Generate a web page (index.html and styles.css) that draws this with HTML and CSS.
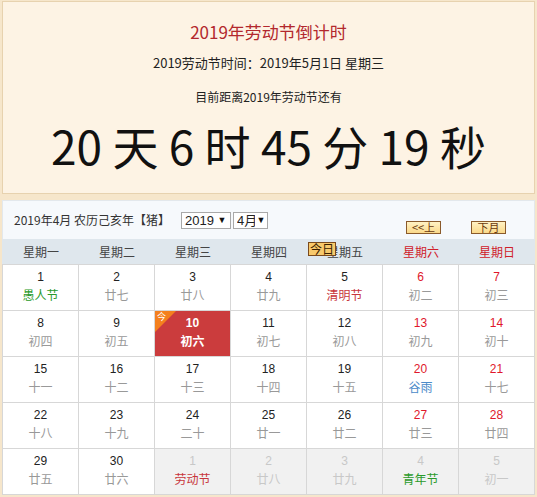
FILE: index.html
```html
<!DOCTYPE html>
<html lang="zh-CN">
<head>
<meta charset="utf-8">
<title>2019年劳动节倒计时</title>
<link rel="stylesheet" href="styles.css">
</head>
<body>
<div class="countdown">
  <h1 class="cd-title">2019年劳动节倒计时</h1>
  <p class="cd-line cd-date">2019劳动节时间：2019年5月1日 星期三</p>
  <p class="cd-line cd-remain">目前距离2019年劳动节还有</p>
  <p class="cd-big">20 天 6 时 45 分 19 秒</p>
</div>

<div class="calendar">
  <div class="cal-head">
    <span class="cal-title">2019年4月 农历己亥年【猪】</span>
    <span class="fake-select sel-year"><span class="sel-text">2019</span><span class="sel-arrow">▼</span></span>
    <span class="fake-select sel-month"><span class="sel-text">4月</span><span class="sel-arrow">▼</span></span>
    <span class="nav">
      <span class="btn btn-prev">&lt;&lt;上</span>
      <span class="btn btn-next">下月</span>
    </span>
  </div>
  <div class="weekdays">
    <span>星期一</span><span>星期二</span><span>星期三</span><span>星期四</span><span>星期五</span><span class="we">星期六</span><span class="we">星期日</span>
  </div>
  <span class="btn btn-today">今日</span>
  <div class="grid">
    <div class="cell"><b>1</b><i class="hol-green">愚人节</i></div>
    <div class="cell"><b>2</b><i>廿七</i></div>
    <div class="cell"><b>3</b><i>廿八</i></div>
    <div class="cell"><b>4</b><i>廿九</i></div>
    <div class="cell"><b>5</b><i class="hol-red">清明节</i></div>
    <div class="cell wkend"><b>6</b><i>初二</i></div>
    <div class="cell wkend"><b>7</b><i>初三</i></div>

    <div class="cell"><b>8</b><i>初四</i></div>
    <div class="cell"><b>9</b><i>初五</i></div>
    <div class="cell today"><span class="today-tag"></span><span class="today-char">今</span><b>10</b><i>初六</i></div>
    <div class="cell"><b>11</b><i>初七</i></div>
    <div class="cell"><b>12</b><i>初八</i></div>
    <div class="cell wkend"><b>13</b><i>初九</i></div>
    <div class="cell wkend"><b>14</b><i>初十</i></div>

    <div class="cell"><b>15</b><i>十一</i></div>
    <div class="cell"><b>16</b><i>十二</i></div>
    <div class="cell"><b>17</b><i>十三</i></div>
    <div class="cell"><b>18</b><i>十四</i></div>
    <div class="cell"><b>19</b><i>十五</i></div>
    <div class="cell wkend"><b>20</b><i class="hol-blue">谷雨</i></div>
    <div class="cell wkend"><b>21</b><i>十七</i></div>

    <div class="cell"><b>22</b><i>十八</i></div>
    <div class="cell"><b>23</b><i>十九</i></div>
    <div class="cell"><b>24</b><i>二十</i></div>
    <div class="cell"><b>25</b><i>廿一</i></div>
    <div class="cell"><b>26</b><i>廿二</i></div>
    <div class="cell wkend"><b>27</b><i>廿三</i></div>
    <div class="cell wkend"><b>28</b><i>廿四</i></div>

    <div class="cell"><b>29</b><i>廿五</i></div>
    <div class="cell"><b>30</b><i>廿六</i></div>
    <div class="cell other"><b>1</b><i class="hol-red">劳动节</i></div>
    <div class="cell other"><b>2</b><i>廿八</i></div>
    <div class="cell other"><b>3</b><i>廿九</i></div>
    <div class="cell other"><b>4</b><i class="hol-green">青年节</i></div>
    <div class="cell other"><b>5</b><i>初一</i></div>
  </div>
</div>
</body>
</html>
```

FILE: styles.css
```css
* { box-sizing: border-box; }

html, body {
  margin: 0;
  padding: 0;
}

body {
  background: #f6e6cb;
  padding: 1px 2px 0 2px;
  width: 537px;
  height: 497px;
  overflow: hidden;
  font-family: "Noto Sans CJK SC", "Noto Sans", sans-serif;
  color: #222;
}

/* ---------- countdown box ---------- */
.countdown {
  background: #fdf3e4;
  border: 1px solid #e7d2af;
  height: 193px;
  text-align: center;
  padding-top: 18px;
}

.cd-title {
  margin: 0;
  font-size: 17px;
  font-weight: normal;
  line-height: 24px;
  color: #b3282d;
}

.cd-line {
  margin: 0;
  font-size: 12px;
  line-height: 20px;
}

.cd-date { margin-top: 9px; font-size: 13px; }
.cd-remain { margin-top: 14px; }

.cd-big {
  margin: 11px 0 0 0;
  font-size: 46px;
  line-height: 54px;
  color: #111;
}

/* ---------- calendar ---------- */
.calendar {
  position: relative;
  margin-top: 6px;
  width: 533px;
  font-family: "Liberation Sans", "Noto Sans CJK SC", sans-serif;
  font-size: 12px;
}

.cal-head {
  display: flex;
  align-items: center;
  height: 39px;
  background: #f6f9fc;
  border: 1px solid #e3e8ec;
  border-bottom: none;
  padding-left: 11px;
  padding-right: 28px;
  font-family: "Noto Sans CJK SC", sans-serif;
}

.cal-title {
  font-size: 12px;
  color: #333;
  line-height: 16px;
}

.fake-select {
  display: inline-flex;
  align-items: center;
  height: 17px;
  border: 1px solid #a9a9a9;
  background: #fff;
  font-family: "Liberation Sans", "Noto Sans CJK SC", sans-serif;
  font-size: 13px;
  color: #222;
  overflow: hidden;
  padding-left: 3px;
}

.sel-year { width: 50px; margin-left: 11px; }
.sel-month { width: 35px; margin-left: 2px; }

.sel-text {
  flex: 1;
  overflow: hidden;
  white-space: nowrap;
  line-height: 15px;
}

.sel-year .sel-text { flex: 0 0 31px; }

.sel-arrow {
  font-size: 9px;
  width: 12px;
  text-align: center;
  color: #111;
  background: #fff;
}

.nav {
  margin-left: auto;
  display: flex;
  gap: 30px;
  align-self: flex-end;
  margin-bottom: 5px;
}

.btn {
  display: inline-block;
  height: 13px;
  border: 1px solid #8a5a2b;
  background: linear-gradient(#fff2c4, #fbd98a);
  color: #6a3a10;
  font-family: "Noto Sans CJK SC", sans-serif;
  font-size: 11px;
  line-height: 11px;
  text-align: center;
  white-space: nowrap;
}

.btn-prev { width: 35px; }
.btn-next { width: 35px; }

.btn-today {
  position: absolute;
  left: 306px;
  top: 42px;
  width: 28px;
  height: 14px;
  font-size: 12px;
  line-height: 12px;
  background: #f8c96c;
  border-color: #7a4a1c;
  color: #3a2000;
  z-index: 2;
}

.weekdays {
  display: grid;
  grid-template-columns: repeat(7, 76px);
  height: 25px;
  background: #dfe7ed;
  align-items: center;
  text-align: center;
  color: #444;
  font-family: "Noto Sans CJK SC", sans-serif;
  font-size: 12px;
  padding-left: 1px;
}

.weekdays .we { color: #d0202a; }

.grid {
  display: grid;
  grid-template-columns: repeat(7, 75px);
  grid-auto-rows: 45px;
  gap: 1px;
  background: #d7d7d7;
  border: 1px solid #d7d7d7;
}

.cell {
  position: relative;
  background: #fff;
  text-align: center;
  padding-top: 4px;
  overflow: hidden;
}

.cell b {
  display: block;
  font-weight: normal;
  font-size: 12px;
  line-height: 17px;
  color: #222;
}

.cell i {
  display: block;
  font-style: normal;
  font-family: "Noto Sans CJK SC", sans-serif;
  font-size: 12px;
  line-height: 17px;
  color: #999;
}

.cell.wkend b { color: #e0172b; }

.cell i.hol-green { color: #2a9a2a; }
.cell i.hol-red { color: #c8363b; }
.cell i.hol-blue { color: #4b8ac8; }

.cell.other { background: #f1f1f1; }
.cell.other b { color: #c8c8c8; }
.cell.other i { color: #c8c8c8; }
.cell.other i.hol-red { color: #c8363b; }
.cell.other i.hol-green { color: #2a9a2a; }

.cell.today { background: #cb3c3d; }
.cell.today b { color: #fff; font-weight: bold; }
.cell.today i { color: #fff; font-weight: bold; }

.today-tag {
  position: absolute;
  left: 0;
  top: 0;
  width: 0;
  height: 0;
  border-top: 21px solid #f4801e;
  border-right: 21px solid transparent;
}

.today-char {
  position: absolute;
  left: 2px;
  top: 0;
  font-family: "Noto Sans CJK SC", sans-serif;
  font-size: 9px;
  line-height: 11px;
  color: #fff;
}
```
